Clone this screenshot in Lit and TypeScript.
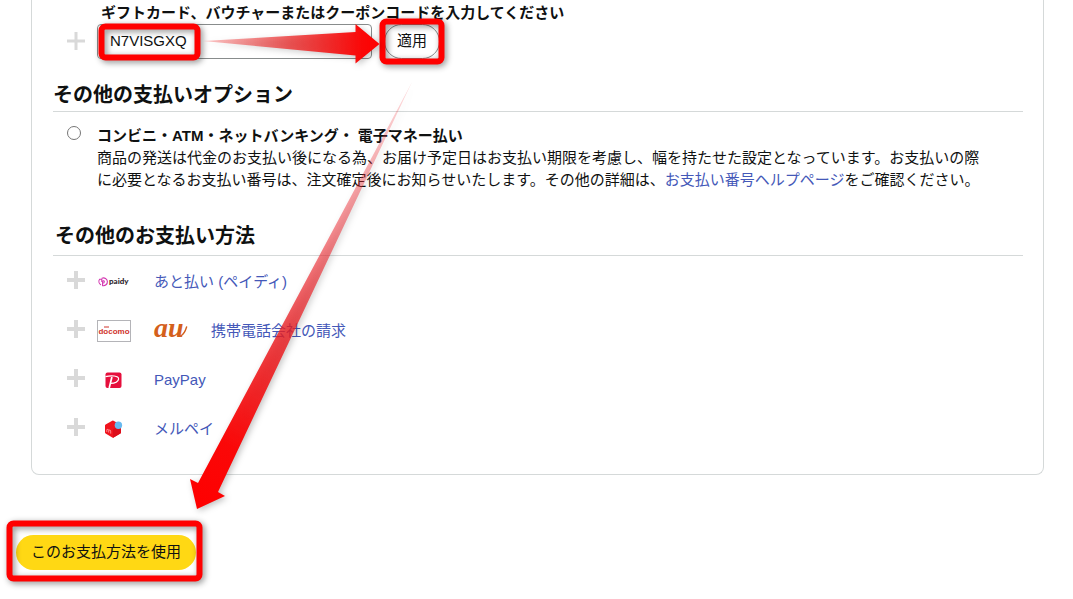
import { LitElement, html, css, svg, TemplateResult } from "lit";
import { customElement, state } from "lit/decorators.js";

interface PayMethod {
  label: string;
  logos: TemplateResult[];
}

const paidyLogo = html`<svg class="logo" viewBox="0 0 34 22" role="img" aria-label="paidy">
  <g fill="none" stroke="#d335b0" stroke-width="1.1" stroke-linecap="round">
    <path d="M3.6 13.6A3.9 3.9 0 0 1 2.6 8.2H4.8V10.4" />
    <path d="M5 7.2A3.9 3.9 0 1 1 5.6 14.6V10.6Q5.8 9.4 6.8 9.8T6.8 12" />
  </g>
  <text x="12" y="13" font-family="Lato, sans-serif" font-size="8" font-weight="900" fill="#30262e">paidy</text>
</svg>`;

const docomoLogo = html`<svg class="logo" viewBox="0 0 34 22" role="img" aria-label="docomo">
  <rect x="0.5" y="0.5" width="33" height="21" fill="#fff" stroke="#b4b4b8" />
  <text x="17" y="14" text-anchor="middle" font-family="Liberation Sans, sans-serif" font-size="8" font-weight="700" fill="#d0342c">docomo</text>
  <path d="M7 7H12" stroke="#d0342c" stroke-width="1" />
</svg>`;

const auLogo = html`<svg class="logo" viewBox="0 0 34 22" role="img" aria-label="au">
  <text x="0" y="17" font-family="Liberation Serif, serif" font-size="28" font-weight="700" font-style="italic" fill="#d4601c">au</text>
  <path d="M26.500 16.200Q30.500 14 32.600 7" fill="none" stroke="#d4601c" stroke-width="1.4" stroke-linecap="round" />
</svg>`;

const paypayLogo = html`<svg class="logo" viewBox="0 0 34 22" role="img" aria-label="PayPay">
  <rect x="8.5" y="3.5" width="16" height="15.5" rx="2" fill="#e60f3c" />
  <path d="M12.2 19L14.9 8" fill="none" stroke="#fff" stroke-width="1.7" />
  <path d="M8.5 7.6C14 6.2 22.2 6.6 21.6 10.2C21 13.4 17 14.4 13.4 14.4" fill="none" stroke="#fff" stroke-width="1.2" />
</svg>`;

const merpayLogo = html`<svg class="logo" viewBox="0 0 34 22" role="img" aria-label="メルペイ">
  <path d="M16 2.6L23.4 6.6Q24 7 24 7.6V14.6Q24 15.3 23.4 15.6L16.7 19.5Q16 19.9 15.3 19.5L8.6 15.6Q8 15.3 8 14.6V7.6Q8 7 8.6 6.6L14.8 3Q15.4 2.5 16 2.6Z" fill="#f0141e" />
  <path d="M16 11.2L24 7V14.6Q24 15.3 23.4 15.6L16 19.8Z" fill="#dc0e1a" />
  <path d="M9.8 14V11.6Q11.4 10.6 11.7 12.2V14.6M11.7 12.2Q13.4 11.4 13.7 13V15.6" fill="none" stroke="#ff8f95" stroke-width="0.9" />
  <circle cx="21.4" cy="7.2" r="3.7" fill="#68baf0" />
</svg>`;

const METHODS: PayMethod[] = [
  { label: "あと払い (ペイディ)", logos: [paidyLogo] },
  { label: "携帯電話会社の請求", logos: [docomoLogo, auLogo] },
  { label: "PayPay", logos: [paypayLogo] },
  { label: "メルペイ", logos: [merpayLogo] },
];

const plusIcon = (weight: number) => html`<svg class="plus" viewBox="0 0 18 18" aria-hidden="true">
  ${svg`<path d="M9 0V18M0 9H18" stroke="#d9d9d9" stroke-width=${weight} />`}
</svg>`;

@customElement("app-root")
export class AppRoot extends LitElement {
  static styles = css`
    :host {
      display: block;
      position: relative;
      overflow: hidden;
      background: #fff;
      color: #0f1111;
      font: 15px/22px "Liberation Sans", "Noto Sans CJK JP", sans-serif;
    }
    .panel {
      margin: 0 29px 0 31px;
      padding: 2px 20px 21px 21px;
      border: 1px solid #d5d9d9;
      border-top: 0;
      border-radius: 0 0 8px 8px;
    }
    .row {
      display: grid;
      grid-template-columns: 30px 1fr;
      padding-left: 14px;
    }
    .plus {
      display: block;
      width: 18px;
      height: 18px;
    }
    .gift .plus {
      margin-top: 30px;
    }
    .gift-label {
      display: block;
      padding-left: 4px;
      font-weight: 700;
    }
    .gift-form {
      display: flex;
      gap: 12px;
    }
    .code {
      box-sizing: border-box;
      width: 275px;
      height: 35px;
      padding: 0 12px 2px;
      border: 1px solid #888c8c;
      border-radius: 4px;
      background: #fff;
      color: inherit;
      font: inherit;
      outline: 0;
    }
    .apply {
      height: 35px;
      padding: 0 12px 2px;
      border: 1px solid #888c8c;
      border-radius: 18px;
      background: #fff;
      color: inherit;
      font: inherit;
    }
    .title {
      margin: 22px 0 0;
      padding-bottom: 2px;
      border-bottom: 1px solid #d5d9d9;
      font-size: 20px;
      line-height: 28px;
    }
    .title.second {
      margin-top: 31px;
      padding: 0 0 5px 2px;
    }
    .option {
      padding-top: 13px;
      padding-right: 30px;
    }
    .radio {
      width: 14px;
      height: 14px;
      margin: 1px 0 0;
    }
    .option-label {
      display: block;
      font-weight: 700;
    }
    .desc {
      margin: 0;
    }
    .link {
      color: #4458b8;
      text-decoration: none;
    }
    .methods {
      margin: 0;
      padding: 1px 0 0;
      list-style: none;
    }
    .method {
      align-items: center;
      min-height: 49px;
    }
    .method .plus {
      margin-bottom: 4px;
    }
    .method-body {
      display: flex;
      align-items: center;
      gap: 23px;
    }
    .logo {
      flex: none;
      width: 34px;
      height: 22px;
      overflow: visible;
    }
    .footer {
      padding: 60px 16px 29px;
    }
    .submit {
      width: 180px;
      height: 35px;
      padding: 0 0 2px;
      border: 0;
      border-radius: 18px;
      background: #ffd814;
      color: inherit;
      font: inherit;
    }
    .marks {
      position: absolute;
      top: 0;
      left: 0;
      width: 1073px;
      height: 599px;
      pointer-events: none;
    }
  `;

  @state() private code = "N7VISGXQ";

  private onCode(e: Event) {
    this.code = (e.target as HTMLInputElement).value;
  }

  render() {
    return html`
      <main class="panel">
        <div class="row gift">
          ${plusIcon(3)}
          <div>
            <label class="gift-label" for="code">ギフトカード、バウチャーまたはクーポンコードを入力してください</label>
            <div class="gift-form">
              <input class="code" id="code" type="text" .value=${this.code} @input=${this.onCode} />
              <button class="apply" type="button">適用</button>
            </div>
          </div>
        </div>

        <h2 class="title">その他の支払いオプション</h2>
        <div class="row option">
          <input class="radio" id="cvs" type="radio" name="pay" />
          <div>
            <label class="option-label" for="cvs">コンビニ・ATM・ネットバンキング・ 電子マネー払い</label>
            <p class="desc">商品の発送は代金のお支払い後になる為、お届け予定日はお支払い期限を考慮し、幅を持たせた設定となっています。お支払いの際に必要となるお支払い番号は、注文確定後にお知らせいたします。その他の詳細は、<a class="link" href="#help">お支払い番号ヘルプページ</a>をご確認ください。</p>
          </div>
        </div>

        <h2 class="title second">その他のお支払い方法</h2>
        <ul class="methods">
          ${METHODS.map(
            (m) => html`<li class="row method">
              ${plusIcon(4)}
              <div class="method-body">${m.logos}<a class="link" href="#method">${m.label}</a></div>
            </li>`
          )}
        </ul>
      </main>
      <div class="footer"><button class="submit" type="button">このお支払方法を使用</button></div>

      <svg class="marks" viewBox="0 0 1073 599" aria-hidden="true">
        <defs>
          <linearGradient id="fadeRight" gradientUnits="userSpaceOnUse" x1="203" y1="41" x2="379" y2="44">
            <stop offset="0" stop-color="#ee2424" stop-opacity="0.25" />
            <stop offset="0.5" stop-color="#ec2424" stop-opacity="0.75" />
            <stop offset="0.9" stop-color="#fa0808" />
            <stop offset="1" stop-color="#ff0000" />
          </linearGradient>
          <linearGradient id="fadeDown" gradientUnits="userSpaceOnUse" x1="412" y1="82" x2="197" y2="509">
            <stop offset="0" stop-color="#ee242c" stop-opacity="0.15" />
            <stop offset="0.35" stop-color="#ee242c" stop-opacity="0.52" />
            <stop offset="0.6" stop-color="#ea1e22" stop-opacity="0.82" />
            <stop offset="0.85" stop-color="#fa0808" />
            <stop offset="1" stop-color="#ff0000" />
          </linearGradient>
          <filter id="shade" filterUnits="userSpaceOnUse" x="0" y="0" width="1073" height="599" color-interpolation-filters="sRGB">
            <feDropShadow dx="2" dy="2" stdDeviation="3" flood-color="#000" flood-opacity="0.45" />
          </filter>
          <filter id="softShade" filterUnits="userSpaceOnUse" x="0" y="0" width="1073" height="599" color-interpolation-filters="sRGB">
            <feDropShadow dx="2" dy="2" stdDeviation="3" flood-color="#000" flood-opacity="0.25" />
          </filter>
        </defs>
        <g filter="url(#shade)" fill="none" stroke="#ff0000" stroke-width="6">
          <rect x="101.5" y="26.5" width="96" height="31" rx="4" />
          <rect x="382.5" y="21.5" width="59" height="40" rx="4" />
          <rect x="9.5" y="523.5" width="190" height="55" rx="4" />
        </g>
        <g filter="url(#softShade)">
          <path d="M203 41L355.500 32V24L379.500 44L355.500 63.500V55.500Z" fill="url(#fadeRight)" />
          <path d="M412 82L198 483L190 479L197 509L225 496L218 492Z" fill="url(#fadeDown)" />
        </g>
      </svg>
    `;
  }
}
